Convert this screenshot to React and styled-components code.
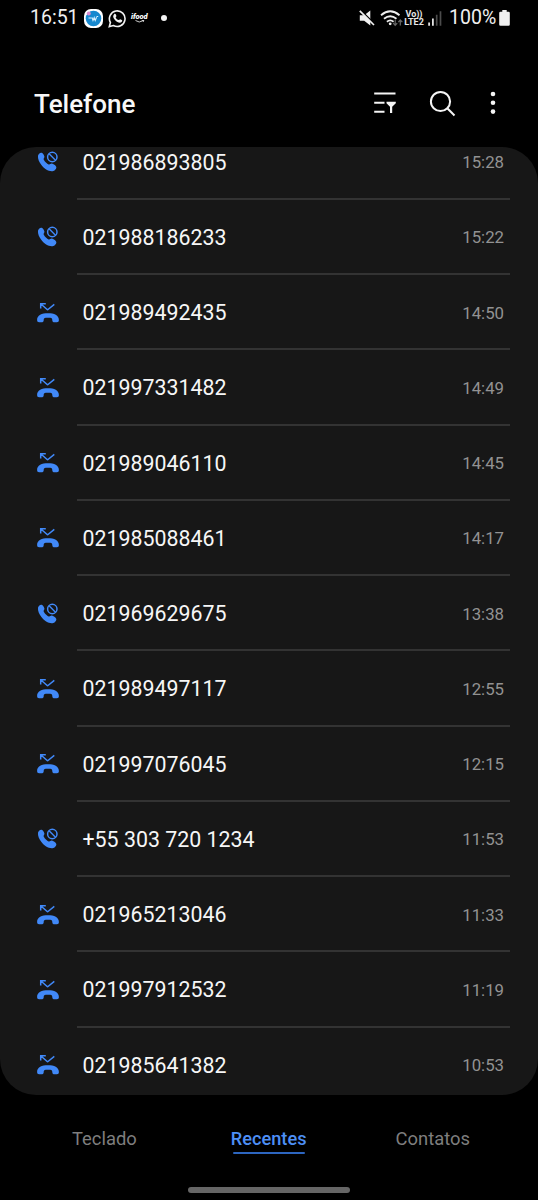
import React from 'react';
import styled, { createGlobalStyle } from 'styled-components';

const GlobalStyle = createGlobalStyle`
  * { box-sizing: border-box; }
  body { margin: 0; background: #000; font-family: Roboto, "Liberation Sans", sans-serif; }
`;

const Screen = styled.div`
  width: 538px;
  height: 1200px;
  display: flex;
  flex-direction: column;
  background: #000;
  color: #f6f6f6;
  overflow: hidden;
`;

const StatusBar = styled.header`
  height: 36px;
  flex: none;
  display: flex;
  align-items: center;
  justify-content: space-between;
  padding: 0 28px 0 30px;
`;

const StatusGroup = styled.div`
  display: flex;
  align-items: center;
`;

const StatusText = styled.span`
  width: ${(p) => p.$width}px;
  font-size: 19.5px;
  line-height: 24px;
  letter-spacing: ${(p) => p.$spacing || 0}px;
  white-space: nowrap;
  color: #f0f0f0;
`;

const Glyph = styled.svg`
  display: block;
  flex: none;
  width: ${(p) => p.$w}px;
  height: ${(p) => p.$h}px;
  margin-left: ${(p) => p.$gap || 0}px;
`;

const AppLogo = styled.span`
  width: 19px;
  height: 19px;
  margin-left: 6px;
  border-radius: 7px;
  background: #fff;
  display: flex;
  align-items: center;
  justify-content: center;
`;

const FoodLogo = styled.span`
  width: 19px;
  margin-left: 4px;
  display: flex;
  flex-direction: column;
  font: italic 900 7.5px/7px Roboto, sans-serif;
  letter-spacing: -0.1px;
  color: #fff;
`;

const Dot = styled.span`
  width: 6px;
  height: 6px;
  margin-left: 11px;
  border-radius: 50%;
  background: #f4f4f4;
`;

const Network = styled.span`
  width: 20px;
  margin-left: 1px;
  display: flex;
  flex-direction: column;
  align-items: center;
  font-size: 9px;
  line-height: 8.5px;
  font-weight: 700;
  color: #e6e6e6;
`;

const TitleBar = styled.div`
  height: 111px;
  flex: none;
  display: flex;
  align-items: center;
  justify-content: space-between;
  padding: 23px 38px 0 34px;
`;

const Title = styled.h1`
  margin: 0;
  padding-top: 2px;
  font-size: 26px;
  line-height: 30px;
  font-weight: 500;
  color: #f8f8f8;
`;

const Actions = styled.div`
  display: flex;
  align-items: center;
`;

const Panel = styled.main`
  height: 948px;
  flex: none;
  overflow: hidden;
  border-radius: 36px;
  background: #171717;
`;

const CallList = styled.ul`
  margin: -22.4px 0 0;
  padding: 0;
  list-style: none;
`;

const CallRow = styled.li`
  height: 75.25px;
  display: flex;
  padding: 0 28px 0 36px;
`;

const IconCell = styled.div`
  width: 41px;
  display: flex;
  align-items: center;
`;

const CallInfo = styled.div`
  flex: 1;
  display: flex;
  align-items: center;
  justify-content: space-between;
  padding: 2px 6px 0 5.5px;
  border-bottom: 2px solid #333;
`;

const Number = styled.span`
  padding-top: 1px;
  font-size: 21.35px;
  line-height: 28px;
  color: #f6f6f6;
`;

const Time = styled.time`
  font-size: 16.8px;
  line-height: 22px;
  color: #929292;
`;

const TabBar = styled.nav`
  flex: none;
  height: 90px;
  display: flex;
  justify-content: space-between;
  padding: 32px 68px 0 72px;
`;

const Tab = styled.span`
  height: 28px;
  font-size: ${(p) => (p.$active ? 18.2 : 18.4)}px;
  line-height: 24px;
  font-weight: ${(p) => (p.$active ? 500 : 400)};
  color: ${(p) => (p.$active ? '#4d8ff5' : '#7e7e7e')};
  margin-left: ${(p) => (p.$active ? 5 : 0)}px;
  display: flex;
  flex-direction: column;
  align-items: center;
`;

const Underline = styled.span`
  width: 72px;
  height: 2px;
  margin-top: 1px;
  flex: none;
  border-radius: 1px;
  background: #2d66c0;
`;

const HomeHandle = styled.div`
  flex: none;
  width: 162px;
  height: 6px;
  margin: 2px auto 0;
  border-radius: 3px;
  background: #666;
`;

const BLUE = '#4189f8';

const BlockedIcon = () => (
  <Glyph $w={24} $h={24} viewBox="0 0 24 24">
    <path
      fill={BLUE}
      d="M2 5.800C2.300 3.700 4.200 2.300 5.600 2.700c1.300.4 2.600 2.400 2.800 3.700.2 1.300-.9 1.800-.8 2.800.2 1.400 3.700 4.900 5.200 5.300 1.200.3 1.700-1.100 3.100-.9 1.300.2 4 2 4.400 3.300.4 1.500-1.500 3.900-3.800 4.300C12.800 21.700 8.100 18.600 5.400 15 3.200 12.100 1.600 8.800 2 5.800z"
    />
    <circle cx="16.300" cy="7" r="4.700" fill="none" stroke={BLUE} strokeWidth="1.500" />
    <path d="M13.100 3.800 19.500 10.200" stroke={BLUE} strokeWidth="1.400" />
  </Glyph>
);

const MissedIcon = () => (
  <Glyph $w={24} $h={24} viewBox="0 0 24 24">
    <path d="M9.800 2.800H4.700v4.700M4.900 3 10.900 8.300q.7.600 1.400 0L18.300 3.300" fill="none" stroke={BLUE} strokeWidth="1.500" />
    <path
      fill={BLUE}
      d="M1.100 19C1 14 5.800 12.200 12 12.200s10.900 1.800 10.900 6.800c0 1.700-.7 2.200-2 2.200h-2.300c-1.600 0-2.200-.6-2.300-2-.1-1.900-.4-2.500-4.300-2.500s-4.200.6-4.300 2.500c-.1 1.400-.7 2-2.300 2H3.100c-1.300 0-2-.5-2-2.200z"
    />
  </Glyph>
);

const CALLS = [
  ['021986893805', '15:28', true],
  ['021988186233', '15:22', true],
  ['021989492435', '14:50', false],
  ['021997331482', '14:49', false],
  ['021989046110', '14:45', false],
  ['021985088461', '14:17', false],
  ['021969629675', '13:38', true],
  ['021989497117', '12:55', false],
  ['021997076045', '12:15', false],
  ['+55 303 720 1234', '11:53', true],
  ['021965213046', '11:33', false],
  ['021997912532', '11:19', false],
  ['021985641382', '10:53', false],
];

export default function App() {
  return (
    <Screen>
      <GlobalStyle />
      <StatusBar>
        <StatusGroup>
          <StatusText $width={48}>16:51</StatusText>
          <AppLogo>
            <Glyph $w={17} $h={17} viewBox="0 0 17 17">
              <circle cx="8.500" cy="8.500" r="7.800" fill="#1688cf" />
              <circle cx="3.800" cy="3.500" r="2" fill="#d98bd0" />
              <path d="M3.500 8h3M7 7.500l1 3 1.200-3 1 3 1.400-3.300M11.500 6.500h1.700" fill="none" stroke="#d9f1ff" strokeWidth="1.100" />
            </Glyph>
          </AppLogo>
          <Glyph $w={19} $h={19} $gap={5} viewBox="0 0 19 19">
            <path d="M1.300 17.600 2.400 13.500A7.800 7.800 0 1 1 5.400 16.500Z" fill="none" stroke="#f2f2f2" strokeWidth="1.600" />
            <path d="M6.100 5.200c.5-.6 1.300-.6 1.600.1l.7 1.500c.2.700-.7 1.200-.7 1.600.6 1.300 1.700 2.200 3 2.700.5 0 1-1.100 1.500-.9l1.700.8c.6.300.2 1.500-.3 2-1.100 1-2.700.7-4.200-.1C7.300 11.700 5.900 10.100 5.300 8.300c-.3-1.200 0-2.300.8-3.100z" fill="#f2f2f2" />
          </Glyph>
          <FoodLogo>
            ifood
            <Glyph $w={10} $h={3} $gap={4} viewBox="0 0 10 3">
              <path d="M.5.5Q4 3.500 8.500.5M6.800.3l2-.1-.4 1.600" fill="none" stroke="#fff" strokeWidth=".8" />
            </Glyph>
          </FoodLogo>
          <Dot />
        </StatusGroup>
        <StatusGroup>
          <Glyph $w={16} $h={16} viewBox="0 0 16 16">
            <path d="M.8 5.200h4.400L11.300.5v15L5.200 10.800H.8z" fill="#f0f0f0" />
            <path d="M1.700.200 15.800 14.100" stroke="#000" strokeWidth="1.600" />
            <path d="M.8.800 15 15" stroke="#f0f0f0" strokeWidth="1.700" />
          </Glyph>
          <Glyph $w={23} $h={17} $gap={5} viewBox="0 0 23 17">
            <path d="M1 5.200Q10.200-2.600 19.500 5.200M4 8.700q6.200-5 12.500 0M6.900 11.700q3.300-2.600 6.700 0" fill="none" stroke="#ededed" strokeWidth="1.800" />
            <circle cx="10.200" cy="13.800" r="1.400" fill="#ededed" />
            <path d="M15.200 9.800v5.400m-2-2 2 2.200 2-2.200M20.300 15.500v-5.400m-2 2 2-2.200 2 2.200" fill="none" stroke="#686868" strokeWidth="1.200" />
          </Glyph>
          <Network>
            <span>Vo))</span>
            <span>LTE2</span>
          </Network>
          <Glyph $w={14} $h={15} $gap={4} viewBox="0 0 14 15">
            <path d="M1.100 11.500v3.200M4.900 7.500v7.200" stroke="#eee" strokeWidth="1.700" />
            <path d="M8.700 3.800v10.900M12.500.2v14.500" stroke="#4c4c4c" strokeWidth="1.700" />
          </Glyph>
          <Glyph $w={0} $h={1} $gap={7} />
          <StatusText $width={49}>100%</StatusText>
          <Glyph $w={11} $h={16} $gap={1} viewBox="0 0 11 16">
            <path d="M3.300 0h4.400v1.800h1.800q1.300 0 1.300 1.300v11.400q0 1.300-1.300 1.300h-8Q.2 15.800.2 14.500V3.100q0-1.300 1.300-1.300h1.800z" fill="#f0f0f0" />
          </Glyph>
        </StatusGroup>
      </StatusBar>
      <TitleBar>
        <Title>Telefone</Title>
        <Actions>
          <Glyph $w={24} $h={24} viewBox="0 0 24 24">
            <path d="M1.200 2.500h21.300M1.200 11.700h10.300M1.200 20.800h10.300" stroke="#f5f5f5" strokeWidth="2" />
            <path d="M13.500 10.700h9.300v1.500l-3.600 3.500V22H17v-6.300l-3.500-3.500z" fill="#f5f5f5" />
          </Glyph>
          <Glyph $w={27} $h={27} $gap={32} viewBox="0 0 27 27" fill="none" stroke="#f5f5f5" strokeWidth="2">
            <circle cx="11.500" cy="11.500" r="9.600" />
            <path d="m18.300 18.300 7.200 7.200" />
          </Glyph>
          <Glyph $w={14} $h={24} $gap={30} viewBox="0 0 14 24" fill="#f5f5f5">
            <circle cx="7" cy="3" r="2.300" />
            <circle cx="7" cy="11.800" r="2.300" />
            <circle cx="7" cy="20.600" r="2.300" />
          </Glyph>
        </Actions>
      </TitleBar>
      <Panel>
        <CallList>
          {CALLS.map(([number, time, blocked]) => (
            <CallRow key={number}>
              <IconCell>{blocked ? <BlockedIcon /> : <MissedIcon />}</IconCell>
              <CallInfo>
                <Number>{number}</Number>
                <Time>{time}</Time>
              </CallInfo>
            </CallRow>
          ))}
        </CallList>
      </Panel>
      <TabBar>
        <Tab>Teclado</Tab>
        <Tab $active>
          Recentes
          <Underline />
        </Tab>
        <Tab>Contatos</Tab>
      </TabBar>
      <HomeHandle />
    </Screen>
  );
}
